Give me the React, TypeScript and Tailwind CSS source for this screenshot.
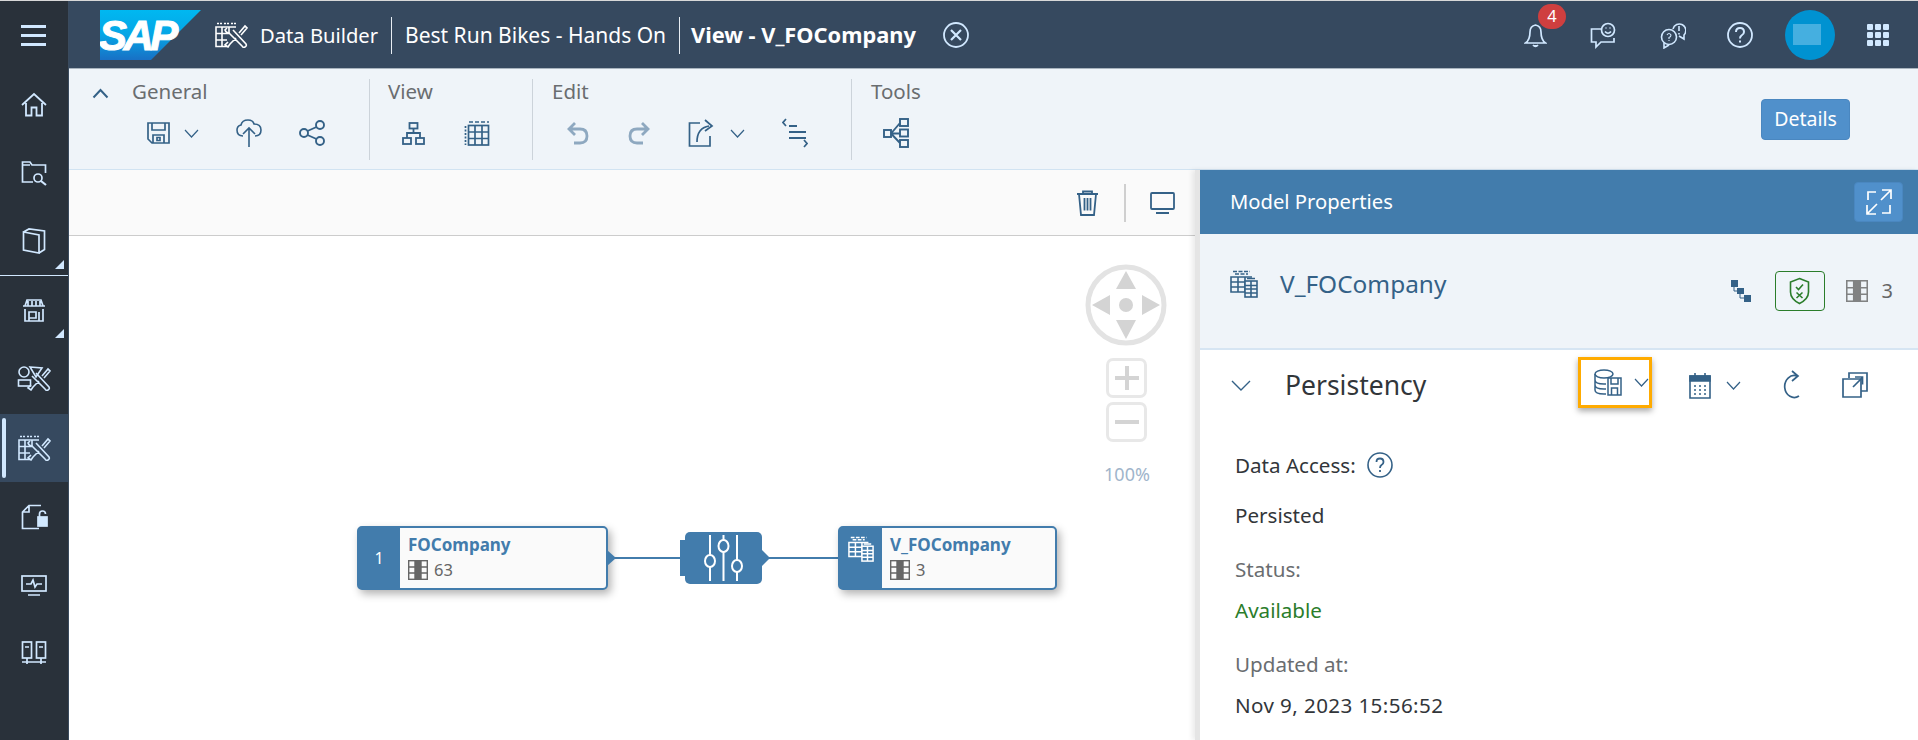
import React from "react";

const S = ({ w, h, vw, vh, sw = 1.6, className, children }: { w: number; h: number; vw?: number; vh?: number; sw?: number; className?: string; children: React.ReactNode }) => (
  <svg width={w} height={h} viewBox={`0 0 ${vw ?? w} ${vh ?? h}`} fill="none" stroke="currentColor" strokeWidth={sw} className={className}>
    {children}
  </svg>
);

const Chevron = ({ className = "" }: { className?: string }) => (
  <S w={15} h={9} sw={1.2} className={className}><path d="M1 1 L7.5 8 L14 1" /></S>
);

const TableTools = () => (
  <S w={34} h={26} sw={1.6}>
    <path d="M3 1.5H8M10 1.5H15M17 1.5H22" strokeDasharray="2 1" />
    <path d="M13 24.5H2V5H22M2 11.5H15M2 18H13M8 5V24M15 5V12" />
    <path d="M19 8 L32 22 Q33 24 31 25 Q29 26 28 24 L15 11 Q12 11 11 8 L13 6 M16 22 L22 16 M25 11 L31 4 L33 6 L27 13 M16 22 L14 25 L11 23 L14 20" />
  </S>
);

const ShapesTools = () => (
  <S w={34} h={26} sw={1.6}>
    <circle cx="7" cy="7" r="5" />
    <rect x="1.5" y="15" width="12" height="6" />
    <path d="M13 2 L25 3 L19 12Z" />
    <path d="M19 8 L32 22 Q33 24 31 25 Q29 26 28 24 L15 11 M25 11 L31 4 L33 6 L27 13 M16 22 L22 16 M16 22 L14 25 L11 23 L14 20" />
  </S>
);

const TableGrid = () => (
  <S w={26} h={26} sw={1.7}>
    <path d="M5 2H25" strokeDasharray="4 2" />
    <path d="M1.5 6V25" strokeDasharray="2 1.5" />
    <rect x="4.5" y="5.5" width="20" height="19.5" />
    <path d="M4.5 12H24.5M4.5 18.5H24.5M11 5.5V25M18 5.5V25" />
  </S>
);

const DoubleTable = ({ w = 28, h = 28, white = false }: { w?: number; h?: number; white?: boolean }) => (
  <S w={w} h={h} vw={28} vh={28} sw={1.6}>
    <path d="M3 1.5H20M5 4H18" strokeDasharray="4 1.5" />
    <path d="M15 22H1V7H22M1 12H15M1 17H15M8 7V22M15 7V22" />
    <rect x="15" y="11" width="12" height="16" className={white ? "fill-[#427cac]" : "fill-[#eff4f9]"} />
    <path d="M15 15.5H27M15 19H27M15 23H27M21 11V27M17 8.5H25" />
  </S>
);

const Columns = ({ w = 20, h = 20, dark = "#666666" }: { w?: number; h?: number; dark?: string }) => (
  <svg width={w} height={h} viewBox="0 0 20 20" fill="none" stroke="#666666" strokeWidth="1.4">
    <rect x="7" y="0.7" width="6" height="18.6" fill={dark} stroke="none" />
    <rect x="0.7" y="0.7" width="18.6" height="18.6" />
    <path d="M7 0.7V19.3M13 0.7V19.3" />
    <path d="M0.7 7H7M13 7H19.3M0.7 13H7M13 13H19.3" />
  </svg>
);

const SideItem = ({ children, className = "" }: { children: React.ReactNode; className?: string }) => (
  <div className={`relative h-[68px] w-full flex items-center justify-center text-[#d1e8ff] ${className}`}>{children}</div>
);

const Corner = () => (
  <svg width="9" height="9" viewBox="0 0 9 9" className="absolute right-[4px] bottom-[6px]"><path d="M9 0V9H0Z" fill="#d1e8ff" /></svg>
);

const Sidebar = () => (
  <aside className="w-[69px] shrink-0 h-full bg-[#29313a] border-r border-[#3a4b5e] flex flex-col">
    <div className="h-[69px] flex flex-col items-center justify-center gap-[6px] pr-[1px] pb-[1px]">
      <div className="w-[25px] h-[3px] bg-[#d1e8ff]" />
      <div className="w-[25px] h-[3px] bg-[#d1e8ff]" />
      <div className="w-[25px] h-[3px] bg-[#d1e8ff]" />
    </div>
    <SideItem>
      <S w={26} h={25} sw={1.8}><path d="M1 13 L13 2 L25 13 M5 11V23.5H10.5V15.5H15.5V23.5H21V11" /></S>
    </SideItem>
    <SideItem className="mt-px">
      <S w={26} h={26} sw={1.7}><path d="M12 22H1.5V2H9L11 5H24.5V13M1.5 5H9" /><circle cx="17" cy="18" r="4" /><path d="M20 21 L25 25" strokeWidth="2.2" /></S>
    </SideItem>
    <SideItem className="h-[69px] border-b border-[#d1e8ff]">
      <S w={24} h={26} sw={1.7}><path d="M1.5 4 L17 7V25 L1.5 22Z M1.5 4 L7 1 L22.5 3V21.5 L17 25" /></S>
      <Corner />
    </SideItem>
    <SideItem>
      <S w={24} h={23} sw={1.7}><path d="M3 7 L5 1H19L21 7Z M1 7H23 M6 2V7M10 2V7M14 2V7M18 2V7 M3 10V22H21V10 M7 22V13H14V19H7 M17 22V13" /></S>
      <Corner />
    </SideItem>
    <SideItem><ShapesTools /></SideItem>
    <SideItem className="mt-[2px] bg-[#36495f]">
      <div className="absolute left-[2px] top-[4px] w-[4px] h-[60px] rounded-full bg-[#d1e8ff]" />
      <TableTools />
    </SideItem>
    <SideItem className="mt-px">
      <S w={27} h={26} sw={1.7}><path d="M20 1.5H8L1.5 8V24.5H18M8 1.5V8H1.5" /><rect x="17" y="13" width="9" height="9" fill="#d1e8ff" /><path d="M18.5 13V10 A3 3 0 0 1 24.5 10" /></S>
    </SideItem>
    <SideItem>
      <S w={26} h={21} sw={1.7}><rect x="1" y="1" width="24" height="15" /><path d="M7 20H19M5 9H10L12 5L14 12L16 9H21" /></S>
    </SideItem>
    <SideItem>
      <S w={26} h={24} sw={1.7}><rect x="1.5" y="1" width="9" height="16" /><rect x="15.5" y="1" width="9" height="16" /><path d="M4 6H8M18 6H22M6 17V23M20 17V23M1 21H25" /></S>
    </SideItem>
  </aside>
);

const HeaderSlot = ({ children }: { children: React.ReactNode }) => (
  <div className="relative w-[68px] h-full flex items-center justify-center text-[#d1e8ff]">{children}</div>
);

const Header = () => (
  <header className="h-[68px] shrink-0 bg-[#36495f] border-b border-[#a9b4be] flex items-start text-white">
    <svg width="101" height="50" viewBox="0 0 101 50" className="mt-[9px] ml-[31px]">
      <defs>
        <linearGradient id="sapg" x1="0" y1="0" x2="0" y2="1">
          <stop offset="0" stopColor="#00b8f1" />
          <stop offset="0.5" stopColor="#06a5e5" />
          <stop offset="1" stopColor="#1870c5" />
        </linearGradient>
      </defs>
      <path d="M0 0H101L51 50H0Z" fill="url(#sapg)" />
      <text x="-1" y="40" fill="#ffffff" stroke="#ffffff" strokeWidth="1" fontSize="42" fontWeight="700" fontStyle="italic" fontFamily="'Liberation Sans', sans-serif" letterSpacing="-3.5">SAP</text>
    </svg>
    <div className="ml-[13px] mt-[21px] text-white"><TableTools /></div>
    <span className="ml-[12px] mt-[19px] w-[118px] whitespace-nowrap leading-[30px] text-[20.2px]">Data Builder</span>
    <div className="ml-[13px] mt-[16px] w-px h-[37px] bg-[#e8eef4]" />
    <span className="ml-[13px] mt-[19px] w-[259px] whitespace-nowrap leading-[30px] text-[21px]">Best Run Bikes - Hands On</span>
    <div className="ml-[15px] mt-[16px] w-px h-[37px] bg-[#e8eef4]" />
    <span className="ml-[11px] mt-[19px] w-[225px] whitespace-nowrap leading-[30px] text-[21.8px] font-bold">View - V_FOCompany</span>
    <div className="ml-[27px] mt-[21px] text-[#d1e8ff]">
      <S w={26} h={26} sw={1.8}><circle cx="13" cy="13" r="12" /><path d="M8 8 L18 18 M18 8 L8 18" strokeWidth="2.2" /></S>
    </div>
    <div className="ml-auto mr-[6px] h-[68px] flex">
      <HeaderSlot>
        <S w={23} h={26} sw={1.7}><path d="M1.5 21 Q6 18 6 10 Q6 4 11.5 3 Q17 4 17 10 Q17 18 21.5 21Z" /><path d="M9 23 Q11.5 26 14 23" fill="currentColor" /></S>
        <div className="absolute left-[37px] top-[3px] w-[28px] h-[25px] rounded-full bg-[#cf3f3f] flex items-center justify-center text-white text-[16.5px]">4</div>
      </HeaderSlot>
      <HeaderSlot>
        <S w={26} h={27} sw={1.7}><path d="M12 7H1.5V20H6V25L11 20H24V16" /><circle cx="18" cy="8" r="6.5" /><path d="M15 9.5 Q18 13 21 9.5" /><path d="M15.5 6H16.5M19.5 6H20.5" /></S>
      </HeaderSlot>
      <div className="ml-[2px] h-full">
        <HeaderSlot>
          <S w={26} h={27} sw={1.6}><circle cx="9" cy="15" r="7.5" /><path d="M4 21V26L9 23" /><path d="M13 7 A6.5 6.5 0 1 1 24 13V17L19 14" /><path d="M19 4V9M19 11V12.5" /><path d="M7 13 Q9 10 11 13 Q11 15 9 15.5V17M9 18V19" strokeWidth="1.1" /></S>
        </HeaderSlot>
      </div>
      <div className="-ml-px h-full">
        <HeaderSlot>
          <S w={26} h={26} sw={1.8}><circle cx="13" cy="13" r="12" /><path d="M9 10 Q9 6 13 6 Q17 6 17 10 Q17 12 14.5 13.5 Q13 14.5 13 16.5 M13 18.5V20.5" strokeWidth="2" /></S>
        </HeaderSlot>
      </div>
      <div className="ml-[2px] w-[68px] flex items-center justify-center">
        <div className="w-[50px] h-[50px] mb-px rounded-full bg-[#0092d1] flex items-center justify-center">
          <div className="w-[28px] h-[21px] bg-[#45afe0] -ml-[6px]" />
        </div>
      </div>
      <HeaderSlot>
        <svg width="22" height="22" viewBox="0 0 22 22" fill="#d1e8ff">
          <rect x="0" y="0" width="6" height="6" rx="1" /><rect x="8" y="0" width="6" height="6" rx="1" /><rect x="16" y="0" width="6" height="6" rx="1" />
          <rect x="0" y="8" width="6" height="6" rx="1" /><rect x="8" y="8" width="6" height="6" rx="1" /><rect x="16" y="8" width="6" height="6" rx="1" />
          <rect x="0" y="16" width="6" height="6" rx="1" /><rect x="8" y="16" width="6" height="6" rx="1" /><rect x="16" y="16" width="6" height="6" rx="1" />
        </svg>
      </HeaderSlot>
    </div>
  </header>
);

const Slot = ({ w, children, dim = false }: { w: string; children: React.ReactNode; dim?: boolean }) => (
  <div className={`${w} flex items-center justify-center ${dim ? "text-[#8ea8c0]" : "text-[#346187]"}`}>{children}</div>
);

const GroupLabel = ({ className = "", children }: { className?: string; children: React.ReactNode }) => (
  <div className={`h-[28px] leading-[24px] text-[20.5px] text-[#6a6d70] ${className}`}>{children}</div>
);

const Toolbar = () => (
  <div className="h-[101px] shrink-0 bg-[#eff4f9] border-b border-[#d1e3f2] flex pt-[10px]">
    <div className="w-[301px] h-[81px] border-r border-[#ccd3da]">
      <div className="flex items-center">
        <div className="w-[63px] pl-[23px] text-[#346187]"><S w={17} h={11} sw={2}><path d="M1.5 9.5 L8.5 2 L15.5 9.5" /></S></div>
        <GroupLabel>General</GroupLabel>
      </div>
      <div className="flex mt-[13px] h-[26px] pl-[71px]">
        <Slot w="w-[36px]">
          <S w={23} h={22} sw={1.7}><path d="M1 1H22V21H5L1 17Z M5 1V8H18V1 M6 21V13H17V21 M10 15.5H13V18.5H10Z" /></S>
        </Slot>
        <Slot w="w-[30px]"><Chevron /></Slot>
        <div className="w-[12px]" />
        <Slot w="w-[62px]">
          <S w={26} h={30} sw={1.6}><path d="M7 18 Q1 18 1 12 Q1 8 5 7 Q6 2 12 2 Q17 2 18 6 Q25 6 25 12 Q25 18 19 18" /><path d="M13 29V10 M7 16 L13 10 L19 16" /></S>
        </Slot>
        <Slot w="w-[63px]">
          <S w={26} h={26} sw={1.9}><circle cx="5" cy="13" r="4" /><circle cx="21" cy="5" r="4" /><circle cx="21" cy="21" r="4" /><path d="M8.5 11 L17.5 7 M8.5 15 L17.5 19" /></S>
        </Slot>
      </div>
    </div>
    <div className="w-[163px] h-[81px] border-r border-[#ccd3da]">
      <GroupLabel className="pl-[18px]">View</GroupLabel>
      <div className="flex mt-[13px] h-[26px] pl-[12px]">
        <Slot w="w-[63px]">
          <S w={23} h={23} sw={1.8}><rect x="7.5" y="1" width="8" height="5.5" /><rect x="1" y="16" width="8" height="6" /><rect x="14" y="16" width="8" height="6" /><path d="M11.5 6.5V11 M5 16V11H18V16" /></S>
        </Slot>
        <Slot w="w-[63px]"><TableGrid /></Slot>
      </div>
    </div>
    <div className="w-[319px] h-[81px] border-r border-[#ccd3da]">
      <GroupLabel className="pl-[19px]">Edit</GroupLabel>
      <div className="flex mt-[13px] h-[26px] pl-[13px]">
        <Slot w="w-[62px]" dim>
          <S w={23} h={24} sw={2.8}><path d="M9 2 L3 8 L9 14 M3 8H14 Q21 8 21 15 Q21 22 14 22H8" /></S>
        </Slot>
        <Slot w="w-[63px]" dim>
          <S w={23} h={24} sw={2.8}><path d="M14 2 L20 8 L14 14 M20 8H9 Q2 8 2 15 Q2 22 9 22H15" /></S>
        </Slot>
        <Slot w="w-[60px]">
          <S w={26} h={30} sw={1.7}><path d="M12 5H1.5V28H22V18" /><path d="M9 24 Q9 10 21 8 M17 2 L24 8 L17 13" /></S>
        </Slot>
        <Slot w="w-[12px]"><div className="shrink-0"><Chevron /></div></Slot>
        <div className="w-[10px]" />
        <Slot w="w-[84px]">
          <S w={26} h={30} sw={1.7}><path d="M4 1 L1 4.5 L4 8 M22 22 L25 25.5 L22 29" /><path d="M7 8H15M7 14H24M7 20H24" strokeWidth="2" /></S>
        </Slot>
      </div>
    </div>
    <div className="w-[90px] h-[81px]">
      <GroupLabel className="pl-[19px]">Tools</GroupLabel>
      <div className="flex mt-[13px] h-[26px] pl-[13px]">
        <Slot w="w-[62px]">
          <S w={26} h={32} sw={1.9}><rect x="1" y="13" width="7" height="7" /><rect x="17" y="2" width="8" height="7" /><rect x="17" y="12.5" width="8" height="7" /><rect x="17" y="23" width="8" height="7" /><path d="M8 16.5H17 M8 16.5 L17 6 M8 16.5 L17 26" /></S>
        </Slot>
      </div>
    </div>
    <button className="ml-auto mr-[68px] mt-[20px] w-[89px] h-[41px] pb-[2px] rounded-[4px] bg-[#5090cb] border border-[#4a87c0] text-white text-[19.5px] leading-none">Details</button>
  </div>
);

const NodeText = ({ title, count }: { title: string; count: string }) => (
  <div className="pl-[8px] pt-[5px]">
    <div className="text-[17px] leading-[24px] font-bold text-[#427cac] whitespace-nowrap">{title}</div>
    <div className="flex items-center gap-[6px] text-[16.5px] leading-[20px] text-[#666666] mt-[3px]">
      <Columns />
      <span>{count}</span>
    </div>
  </div>
);

const Canvas = () => (
  <div className="relative flex-1 bg-white">
    <svg width="82" height="82" viewBox="0 0 82 82" className="absolute left-[1016px] top-[28px]">
      <circle cx="41" cy="41" r="38" fill="none" stroke="#e3e3e3" strokeWidth="5" />
      <path d="M41 7 L51 25 H31Z M41 75 L51 56 H31Z M7 41 L25 31 V51Z M75 41 L57 31 V51Z" fill="#d4d4d4" />
      <circle cx="41" cy="41" r="7" fill="#d4d4d4" />
    </svg>
    <div className="absolute left-[1037px] top-[122px] w-[41px] h-[40px] rounded-[7px] border-[3px] border-[#e8e8e8] flex items-center justify-center">
      <svg width="24" height="24" viewBox="0 0 24 24"><path d="M10 0H14V10H24V14H14V24H10V14H0V10H10Z" fill="#d4d4d4" /></svg>
    </div>
    <div className="absolute left-[1037px] top-[166px] w-[41px] h-[40px] rounded-[7px] border-[3px] border-[#e8e8e8] flex items-center justify-center">
      <div className="w-[24px] h-[4px] bg-[#d4d4d4]" />
    </div>
    <div className="absolute left-[1028px] top-[226px] w-[60px] text-center text-[18px] leading-[24px] text-[#9fb5cb]">100%</div>

    <div className="absolute left-[538px] top-[321px] w-[75px] h-[2px] bg-[#427cac]" />
    <div className="absolute left-[695px] top-[321px] w-[75px] h-[2px] bg-[#427cac]" />

    <div className="absolute left-[288px] top-[290px] w-[251px] h-[64px] rounded-[5px] border-2 border-[#427cac] bg-[#fafafa] flex shadow-[3px_4px_8px_rgba(0,0,0,0.3)]">
      <div className="w-[42px] -ml-px bg-[#427cac] flex items-center justify-center text-white text-[16px]">1</div>
      <NodeText title="FOCompany" count="63" />
    </div>
    <svg width="10" height="16" viewBox="0 0 10 16" className="absolute left-[538px] top-[314px]"><path d="M0 0L9 8L0 16Z" fill="#427cac" /></svg>

    <div className="absolute left-[616px] top-[296px] w-[77px] h-[52px] rounded-[5px] bg-[#427cac] flex items-center justify-center">
      <svg width="39" height="48" viewBox="0 0 39 48" fill="none" stroke="#ffffff" strokeWidth="2">
        <path d="M6 1V21M6 33V47M19.5 1V6M19.5 18V47M33 1V26M33 38V47" />
        <ellipse cx="6" cy="27" rx="5" ry="6" />
        <ellipse cx="19.5" cy="12" rx="5" ry="6" />
        <ellipse cx="33" cy="32" rx="5" ry="6" />
      </svg>
    </div>
    <div className="absolute left-[611px] top-[304px] w-[6px] h-[36px] bg-[#427cac]" />
    <svg width="9" height="16" viewBox="0 0 9 16" className="absolute left-[693px] top-[314px]"><path d="M0 0L8 8L0 16Z" fill="#427cac" /></svg>

    <div className="absolute left-[769px] top-[290px] w-[219px] h-[64px] rounded-[5px] border-2 border-[#427cac] bg-[#fafafa] flex shadow-[3px_4px_8px_rgba(0,0,0,0.3)]">
      <div className="w-[43px] -ml-px bg-[#427cac] text-white flex justify-center pt-[8px]"><DoubleTable w={26} h={26} white /></div>
      <NodeText title="V_FOCompany" count="3" />
    </div>
  </div>
);

const CanvasColumn = () => (
  <div className="w-[1126px] shrink-0 flex flex-col">
    <div className="h-[66px] shrink-0 bg-[#fafafa] border-b border-[#cccccc] flex items-center text-[#346187]">
      <div className="ml-[1005px] w-[26px] flex justify-center">
        <S w={23} h={27} sw={1.8}><path d="M1 5H22M7 5V2.5H16V5M3 5 L5 26H18L20 5M8.5 9V21.5M11.5 9V21.5M14.5 9V21.5" /></S>
      </div>
      <div className="ml-[24px] w-[2px] h-[38px] bg-[#cfcfcf]" />
      <div className="ml-[24px]">
        <S w={25} h={22} sw={1.8}><rect x="1" y="1" width="23" height="16" rx="1" /><path d="M6 21H19" strokeWidth="2" /></S>
      </div>
    </div>
    <Canvas />
  </div>
);

const PanelAction = ({ w, children }: { w: string; children: React.ReactNode }) => (
  <div className={`${w} flex items-center justify-center text-[#346187]`}>{children}</div>
);

const Panel = () => (
  <section className="flex-1 relative flex flex-col bg-white border-l-[5px] border-[#e5e5e5] shadow-[-3px_0_5px_rgba(0,0,0,0.08)]">
    <div className="h-[64px] shrink-0 bg-[#427cac] flex items-center text-white">
      <span className="ml-[30px] pb-[2px] text-[20.2px] leading-none">Model Properties</span>
      <div className="ml-auto mr-[15px] w-[49px] h-[40px] rounded-[4px] bg-[#5090cb] border border-[#4a87c0] flex items-center justify-center">
        <S w={26} h={26} sw={1.7}><path d="M2 11V3H10 M16 1H25V10 M25 1 L15 11 M1 25 L11 15 M1 16V25H10 M16 24H24V16" /></S>
      </div>
    </div>
    <div className="h-[116px] shrink-0 bg-[#eff4f9] border-b-2 border-[#d6e5f3] flex items-start">
      <div className="ml-[30px] mt-[36px] text-[#346187]"><DoubleTable /></div>
      <span className="ml-[22px] mt-[35px] text-[#346187] text-[24.4px] leading-[30px]">V_FOCompany</span>
      <div className="ml-auto mt-[37px] flex items-center h-[40px] text-[#346187]">
        <svg width="20" height="22" viewBox="0 0 20 22" fill="#346187"><rect x="0" y="0" width="7" height="7" /><rect x="6" y="8" width="7" height="6" /><rect x="13" y="15" width="7" height="7" /><path d="M3 7V11H6M9 14V18H13" stroke="#346187" fill="none" /></svg>
        <div className="ml-[24px] w-[50px] h-[40px] rounded-[4px] border border-[#2b7d2b] flex items-center justify-center">
          <svg width="21" height="28" viewBox="0 0 21 28" fill="none" stroke="#2b7d2b" strokeWidth="1.6"><path d="M10.5 1.5 L19.5 5V15 Q19.5 22 10.5 26.5 Q1.5 22 1.5 15V5Z" /><path d="M7 10 L9.5 12.5 L14 7.5 M7.5 15.5 L13.5 21 M13.5 15.5 L7.5 21" /></svg>
        </div>
        <div className="ml-[21px] opacity-80"><Columns w={22} h={22} /></div>
        <span className="ml-[14px] mr-[25px] text-[20px] leading-none text-[#666666]">3</span>
      </div>
    </div>
    <div className="h-[70px] shrink-0 flex items-center text-[#346187]">
      <div className="ml-[31px] w-[20px] flex justify-center"><S w={20} h={11} sw={1.4}><path d="M1 1 L10 10 L19 1" /></S></div>
      <span className="ml-[34px] w-[142px] whitespace-nowrap text-[26.5px] leading-none text-[#32363a]">Persistency</span>
      <div className="ml-[151px] w-[74px] h-[51px] mt-[-6px] border-[3px] border-[#ffab00] shadow-[0_3px_6px_rgba(0,0,0,0.35)] flex items-center bg-white">
        <div className="ml-[13px]">
          <S w={28} h={27} sw={1.5}><ellipse cx="10" cy="5" rx="9" ry="4" /><path d="M1 5V21Q1 25 10 25H12M1 11Q1 15 10 15H12M1 16Q1 20 10 20H12" /><path d="M14 9H27V26H14Z M17 9V15H24V9 M17.5 26V19H23.5V26" /></S>
        </div>
        <div className="ml-[12px] shrink-0"><Chevron /></div>
      </div>
      <PanelAction w="w-[22px] ml-[37px]">
        <S w={22} h={27} sw={1.6}><path d="M1 4H21V26H1Z" /><path d="M1 4H21V9H1Z" fill="currentColor" /><path d="M6 1V4M16 1V4" /><path d="M5 14H7M10 14H12M15 14H17M5 18H7M10 18H12M15 18H17M5 22H7M10 22H12M15 22H17" /></S>
      </PanelAction>
      <div className="ml-[15px]"><Chevron /></div>
      <PanelAction w="w-[22px] ml-[42px]">
        <S w={22} h={30} sw={1.7}><path d="M14 6 A9.5 11 0 1 0 16 26 M9 1 L15 6 L9 11" /></S>
      </PanelAction>
      <PanelAction w="w-[26px] ml-[37px]">
        <S w={26} h={26} sw={1.7}><path d="M7 6V1H25V19H19" /><path d="M1 7H19V25H1Z" /><path d="M11 15 L20 6 M13 5H20.5V12.5" /></S>
      </PanelAction>
    </div>
    <div className="pl-[35px] mt-[30px] text-[20.6px] leading-[30px] text-[#32363a]">
      <div className="flex items-center">
        <span>Data Access:</span>
        <div className="ml-[11px] text-[#346187]">
          <S w={26} h={26} sw={1.6}><circle cx="13" cy="13" r="12" /><path d="M9.5 10 Q9.5 6.5 13 6.5 Q16.5 6.5 16.5 10 Q16.5 12 14.5 13 Q13 14 13 16 M13 18V20" strokeWidth="1.8" /></S>
        </div>
      </div>
      <div className="mt-[20px]">Persisted</div>
      <div className="mt-[24px] text-[#6a6d70]">Status:</div>
      <div className="mt-[11px] text-[#2b7d2b]">Available</div>
      <div className="mt-[24px] text-[#6a6d70]">Updated at:</div>
      <div className="mt-[11px] tracking-[0.4px]">Nov 9, 2023 15:56:52</div>
    </div>
  </section>
);

export default function App() {
  return (
    <div className="w-[1918px] h-[740px] overflow-hidden bg-white border-t border-[#d8d8d8] flex font-['Noto_Sans','Open_Sans',sans-serif]">
      <Sidebar />
      <div className="flex-1 flex flex-col min-w-0">
        <Header />
        <Toolbar />
        <div className="flex-1 flex min-h-0">
          <CanvasColumn />
          <Panel />
        </div>
      </div>
    </div>
  );
}
